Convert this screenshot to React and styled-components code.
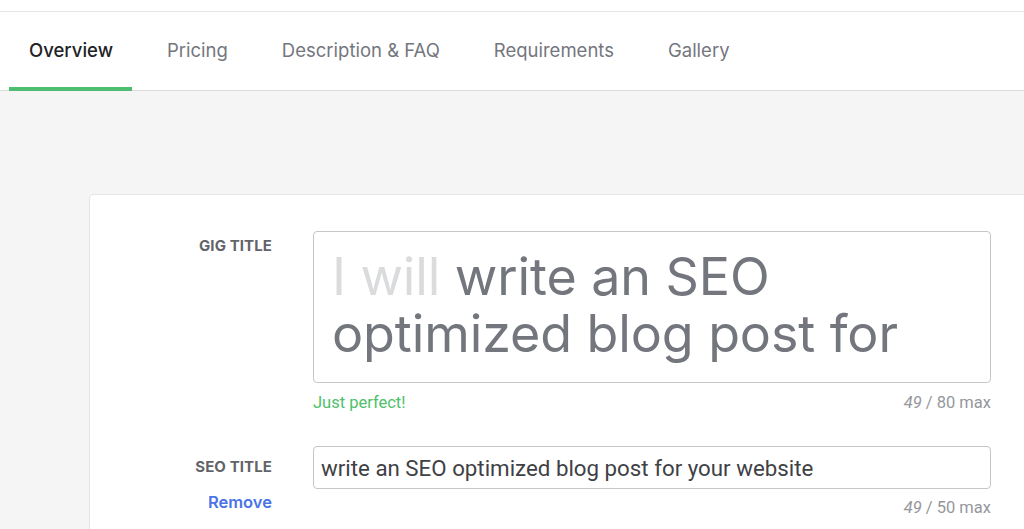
import React from "react";
import styled, { createGlobalStyle } from "styled-components";

const Global = createGlobalStyle`
  html, body { margin: 0; padding: 0; background: #f5f5f5; }
  body { font-family: "Inter", "Open Sans", sans-serif; overflow: hidden; }
  * { box-sizing: border-box; }
`;

const Page = styled.div`
  width: 1024px;
  height: 529px;
  overflow: hidden;
  background: #f5f5f5;
  display: flex;
  flex-direction: column;
`;

const TopStrip = styled.div`
  flex-shrink: 0;
  height: 12px;
  background: #fff;
  border-bottom: 1px solid #e4e5e7;
`;

const TabBar = styled.nav`
  flex-shrink: 0;
  height: 79px;
  background: #fff;
  border-bottom: 1px solid #dadbdd;
  display: flex;
  align-items: stretch;
  gap: 15px;
  padding-left: 9px;
`;

const Tab = styled.div`
  display: flex;
  align-items: center;
  padding: 1px 19px 0 20px;
  font-size: 18.5px;
  font-weight: ${p => (p.$active ? 500 : 400)};
  color: ${p => (p.$active ? "#222325" : "#74767e")};
  border-bottom: 4px solid ${p => (p.$active ? "#4dbe6f" : "transparent")};
  margin-bottom: -1px;
`;

const Body = styled.main`
  flex: 1 0 auto;
  padding: 103px 0 0 89px;
`;

const Card = styled.section`
  background: #fff;
  border: 1px solid #e4e5e7;
  border-radius: 4px;
  width: 960px;
  height: 400px;
  padding: 36px 0 0 0;
`;

const Row = styled.div`
  display: grid;
  grid-template-columns: 182px 678px;
  column-gap: 41px;
  margin-bottom: ${p => p.$mb || 0}px;
`;

const LabelCol = styled.div`
  display: flex;
  flex-direction: column;
  align-items: flex-end;
  padding-top: ${p => p.$pt || 0}px;
`;

const Label = styled.label`
  font-size: 15px;
  font-weight: 700;
  color: #62646a;
  text-transform: uppercase;
  letter-spacing: 0.1px;
`;

const RemoveLink = styled.a`
  margin-top: 16px;
  font-size: 16.5px;
  font-weight: 600;
  color: #4a73e8;
  text-decoration: none;
`;

const FieldCol = styled.div`
  display: flex;
  flex-direction: column;
`;

const TitleBox = styled.div`
  border: 1px solid #c5c6c9;
  border-radius: 4px;
  height: 152px;
  padding: 16px 18px;
  font-size: 52px;
  line-height: 57px;
  color: #74767e;
  letter-spacing: -0.1px;
`;

const Prefix = styled.span`
  color: #dadbdd;
`;

const InputBox = styled.div`
  border: 1px solid #c5c6c9;
  border-radius: 4px;
  height: 43px;
  padding: 0 7px;
  display: flex;
  align-items: center;
  font-family: "Roboto", "Liberation Sans", sans-serif;
  font-size: 22.3px;
  color: #404145;
`;

const Meta = styled.div`
  display: flex;
  justify-content: space-between;
  align-items: center;
  margin-top: ${p => p.$mt || 0}px;
  font-family: "Roboto", "Liberation Sans", sans-serif;
  font-size: 16.5px;
  color: #95979d;
`;

const Hint = styled.span`
  color: #4fbf6b;
`;

const Count = styled.span`
  margin-left: auto;
  em { font-style: italic; }
`;

export default function App() {
  const tabs = ["Overview", "Pricing", "Description & FAQ", "Requirements", "Gallery"];
  return (
    <Page>
      <Global />
      <TopStrip />
      <TabBar>
        {tabs.map((t, i) => (
          <Tab key={t} $active={i === 0}>{t}</Tab>
        ))}
      </TabBar>
      <Body>
        <Card>
          <Row $mb={34}>
            <LabelCol $pt={5}>
              <Label>Gig Title</Label>
            </LabelCol>
            <FieldCol>
              <TitleBox>
                <Prefix>I will </Prefix>write an SEO optimized blog post for
              </TitleBox>
              <Meta $mt={10}>
                <Hint>Just perfect!</Hint>
                <Count><em>49</em> / 80 max</Count>
              </Meta>
            </FieldCol>
          </Row>
          <Row>
            <LabelCol $pt={11}>
              <Label>SEO Title</Label>
              <RemoveLink href="#">Remove</RemoveLink>
            </LabelCol>
            <FieldCol>
              <InputBox>write an SEO optimized blog post for your website</InputBox>
              <Meta $mt={9}>
                <Count><em>49</em> / 50 max</Count>
              </Meta>
            </FieldCol>
          </Row>
        </Card>
      </Body>
    </Page>
  );
}
